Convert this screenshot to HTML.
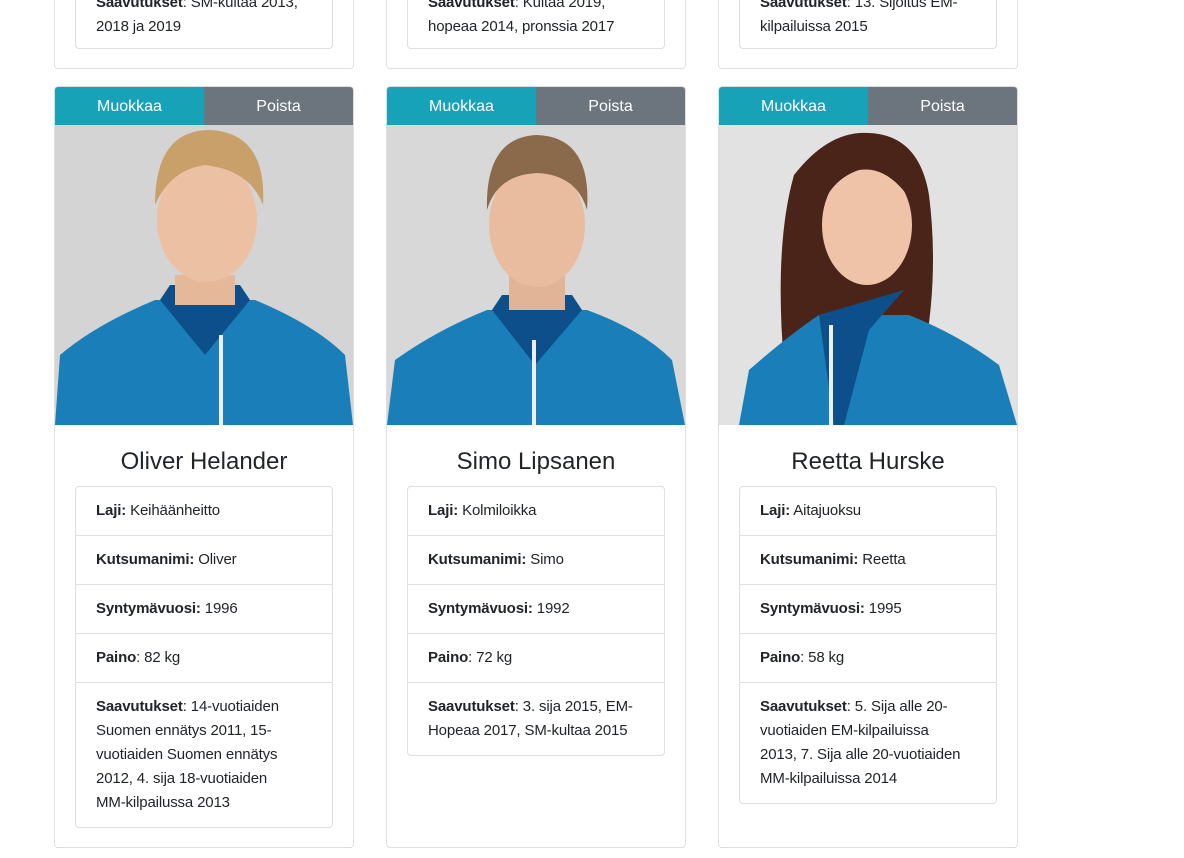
<!DOCTYPE html>
<html><head><meta charset="utf-8"><style>
*{box-sizing:border-box;margin:0;padding:0}
body{width:1184px;height:858px;overflow:hidden;background:#fff;font-family:"Liberation Sans",sans-serif;color:#212529;font-size:15px;letter-spacing:-0.15px;position:relative}
.card{position:absolute;width:300px;border:1px solid #dfdfdf;border-radius:4px;background:#fff;overflow:hidden}
.btns{display:flex;height:38px}
.btns div{flex:1;color:#fff;text-align:center;line-height:39px;font-size:16px;letter-spacing:0}
.m{background:#17a2b8}.p{background:#6c757d}
.img{height:300px;display:block}
h3{font-weight:normal;font-size:24px;text-align:center;margin-top:21px;height:40px;line-height:32px;letter-spacing:0}
ul{list-style:none;margin:0 20px;border:1px solid #dfdfdf;border-radius:4px}
li{padding:12px 20px;line-height:24px;border-top:1px solid #dfdfdf;white-space:nowrap}
li:first-child{border-top:0}
b{font-weight:bold}
</style></head><body>

<div class="card" style="left:54px;top:-60px;height:129px"><ul style="position:absolute;left:0;right:0;top:-1px;height:109px;margin:0 20px"><li style="padding-top:50px"><b>Saavutukset</b>: SM-kultaa 2013,<br>2018 ja 2019</li></ul></div>
<div class="card" style="left:386px;top:-60px;height:129px"><ul style="position:absolute;left:0;right:0;top:-1px;height:109px;margin:0 20px"><li style="padding-top:50px"><b>Saavutukset</b>: Kultaa 2019,<br>hopeaa 2014, pronssia 2017</li></ul></div>
<div class="card" style="left:718px;top:-60px;height:129px"><ul style="position:absolute;left:0;right:0;top:-1px;height:109px;margin:0 20px"><li style="padding-top:50px"><b>Saavutukset</b>: 13. Sijoitus EM-<br>kilpailuissa 2015</li></ul></div>

<div class="card" style="left:54px;top:86px;height:762px">
<div class="btns"><div class="m">Muokkaa</div><div class="p">Poista</div></div>
<svg class="img" width="298" height="300"><rect width="298" height="300" fill="#d4d4d4"/><path d="M0 300 L5 230 Q40 200 100 175 L200 175 Q260 200 290 230 L298 300Z" fill="#1a7fb8"/><path d="M105 175 L150 230 L195 175 L185 160 L115 160Z" fill="#0d4f8a"/><rect x="120" y="150" width="60" height="30" fill="#e6b89a"/><ellipse cx="152" cy="95" rx="50" ry="62" fill="#ecc0a2"/><path d="M100 80 Q100 5 155 5 Q212 8 208 80 Q195 45 150 40 Q115 45 100 80Z" fill="#c9a06a"/><rect x="164" y="210" width="4" height="90" fill="#eee"/></svg>
<h3>Oliver Helander</h3>
<ul><li><b>Laji:</b> Keihäänheitto</li><li><b>Kutsumanimi:</b> Oliver</li><li><b>Syntymävuosi:</b> 1996</li><li><b>Paino</b>: 82 kg</li><li><b>Saavutukset</b>: 14-vuotiaiden<br>Suomen ennätys 2011, 15-<br>vuotiaiden Suomen ennätys<br>2012, 4. sija 18-vuotiaiden<br>MM-kilpailussa 2013</li></ul>
</div>

<div class="card" style="left:386px;top:86px;height:762px">
<div class="btns"><div class="m">Muokkaa</div><div class="p">Poista</div></div>
<svg class="img" width="298" height="300"><rect width="298" height="300" fill="#d8d8d8"/><path d="M0 300 L8 235 Q50 205 100 185 L200 185 Q255 205 285 235 L298 300Z" fill="#1a7fb8"/><path d="M105 185 L148 240 L195 185 L185 170 L115 170Z" fill="#0d4f8a"/><rect x="122" y="150" width="56" height="35" fill="#e2b497"/><ellipse cx="150" cy="100" rx="48" ry="62" fill="#e9bc9f"/><path d="M100 85 Q98 12 150 10 Q205 12 200 85 Q190 50 150 48 Q110 50 100 85Z" fill="#8a6a4a"/><rect x="145" y="215" width="4" height="85" fill="#eee"/></svg>
<h3>Simo Lipsanen</h3>
<ul><li><b>Laji:</b> Kolmiloikka</li><li><b>Kutsumanimi:</b> Simo</li><li><b>Syntymävuosi:</b> 1992</li><li><b>Paino</b>: 72 kg</li><li><b>Saavutukset</b>: 3. sija 2015, EM-<br>Hopeaa 2017, SM-kultaa 2015</li></ul>
</div>

<div class="card" style="left:718px;top:86px;height:762px">
<div class="btns"><div class="m">Muokkaa</div><div class="p">Poista</div></div>
<svg class="img" width="298" height="300"><rect width="298" height="300" fill="#e2e2e2"/><path d="M65 240 Q55 120 75 50 Q110 5 150 8 Q200 10 210 70 Q220 150 205 230Z" fill="#4a2418"/><path d="M20 300 L30 245 Q70 210 100 190 L190 190 Q240 210 280 240 L298 300Z" fill="#1a7fb8"/><path d="M100 190 L115 300 L125 300 L150 205 L185 165Z" fill="#0d4f8a"/><ellipse cx="148" cy="100" rx="45" ry="60" fill="#eec3a8"/><path d="M100 90 Q105 20 150 18 Q195 22 195 80 Q170 40 140 45 Q110 55 100 90Z" fill="#4a2418"/><rect x="110" y="200" width="4" height="100" fill="#eee"/></svg>
<h3>Reetta Hurske</h3>
<ul><li><b>Laji:</b> Aitajuoksu</li><li><b>Kutsumanimi:</b> Reetta</li><li><b>Syntymävuosi:</b> 1995</li><li><b>Paino</b>: 58 kg</li><li><b>Saavutukset</b>: 5. Sija alle 20-<br>vuotiaiden EM-kilpailuissa<br>2013, 7. Sija alle 20-vuotiaiden<br>MM-kilpailuissa 2014</li></ul>
</div>
</body></html>
